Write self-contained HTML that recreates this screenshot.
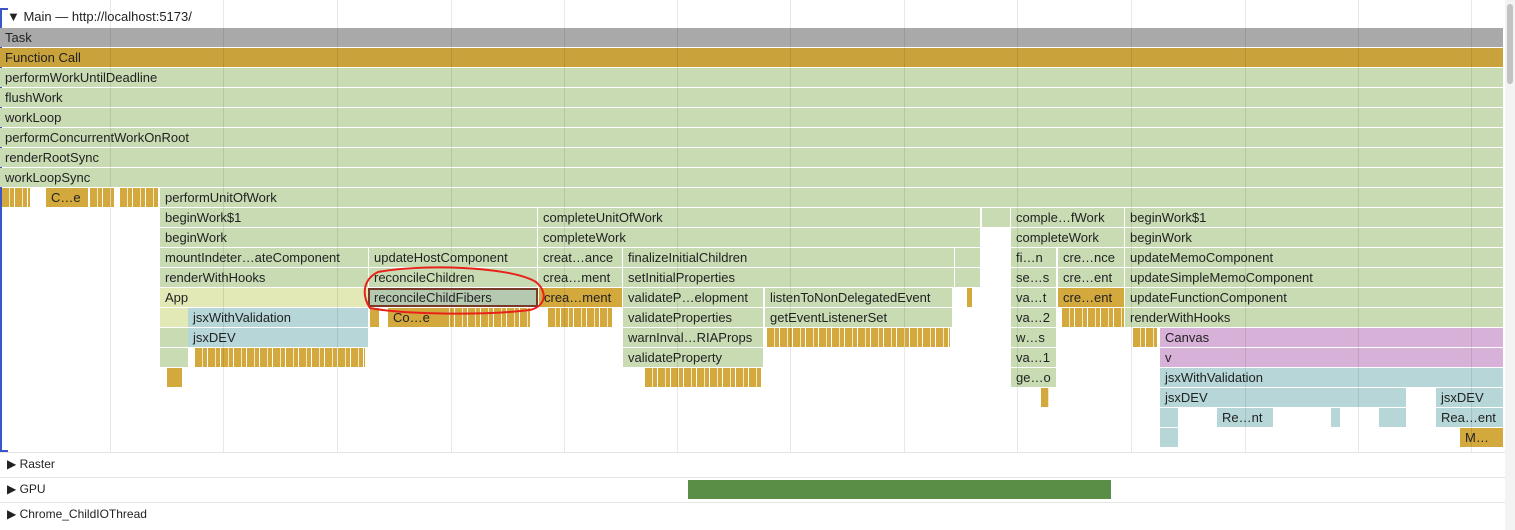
<!DOCTYPE html>
<html><head><meta charset="utf-8"><style>
*{margin:0;padding:0;box-sizing:border-box}
body{width:1515px;height:530px;overflow:hidden;background:#fff;position:relative;font-family:"Liberation Sans",sans-serif;font-size:13px;color:#222}
.b{position:absolute;height:19px;line-height:19px;padding-left:5px;overflow:hidden;white-space:nowrap;color:#222}
.g{background:#c8dbb3}.o{background:#d3a93d}.y{background:#e3e8b7}.u{background:#b6d6d8}.p{background:#d7b1d7}.k{background:#a9a9a9}
.s{background:repeating-linear-gradient(90deg,#d3a93d 0 7px,#f4e7c4 7px 8px,#d3a93d 8px 12px,#fff 12px 13px)}
.v{position:absolute;top:0;height:452px;width:1px;background:rgba(0,0,0,0.09)}
.t{position:absolute;left:7px;font-size:13px}
.l{position:absolute;left:0;width:1505px;height:1px;background:#e4e4e4}
</style></head><body>
<div style="position:absolute;left:0;top:8px;width:2px;height:444px;background:#3a56c8"></div>
<div style="position:absolute;left:0;top:8px;width:8px;height:2px;background:#3a56c8"></div>
<div style="position:absolute;left:0;top:450px;width:8px;height:2px;background:#3a56c8"></div>
<div class="t" style="top:9px">▼ Main — http://localhost:5173/</div>

<div class="b k" style="left:0;top:28px;width:1503px">Task</div>
<div class="b" style="left:0;top:48px;width:1503px;background:#c9a23b">Function Call</div>
<div class="b g" style="left:0;top:68px;width:1503px">performWorkUntilDeadline</div>
<div class="b g" style="left:0;top:88px;width:1503px">flushWork</div>
<div class="b g" style="left:0;top:108px;width:1503px">workLoop</div>
<div class="b g" style="left:0;top:128px;width:1503px">performConcurrentWorkOnRoot</div>
<div class="b g" style="left:0;top:148px;width:1503px">renderRootSync</div>
<div class="b g" style="left:0;top:168px;width:1503px">workLoopSync</div>

<div class="b s" style="left:2px;top:188px;width:28px"></div>
<div class="b o" style="left:46px;top:188px;width:42px">C…e</div>
<div class="b s" style="left:90px;top:188px;width:24px"></div>
<div class="b s" style="left:120px;top:188px;width:38px"></div>
<div class="b g" style="left:160px;top:188px;width:1343px">performUnitOfWork</div>

<div class="b g" style="left:160px;top:208px;width:377px">beginWork$1</div>
<div class="b g" style="left:538px;top:208px;width:442px">completeUnitOfWork</div>
<div class="b g" style="left:982px;top:208px;width:28px"></div>
<div class="b g" style="left:1011px;top:208px;width:113px">comple…fWork</div>
<div class="b g" style="left:1125px;top:208px;width:378px">beginWork$1</div>

<div class="b g" style="left:160px;top:228px;width:377px">beginWork</div>
<div class="b g" style="left:538px;top:228px;width:442px">completeWork</div>
<div class="b g" style="left:1011px;top:228px;width:113px">completeWork</div>
<div class="b g" style="left:1125px;top:228px;width:378px">beginWork</div>

<div class="b g" style="left:160px;top:248px;width:208px">mountIndeter…ateComponent</div>
<div class="b g" style="left:369px;top:248px;width:168px">updateHostComponent</div>
<div class="b g" style="left:538px;top:248px;width:84px">creat…ance</div>
<div class="b g" style="left:623px;top:248px;width:331px">finalizeInitialChildren</div>
<div class="b g" style="left:955px;top:248px;width:25px"></div>
<div class="b g" style="left:1011px;top:248px;width:45px">fi…n</div>
<div class="b g" style="left:1058px;top:248px;width:66px">cre…nce</div>
<div class="b g" style="left:1125px;top:248px;width:378px">updateMemoComponent</div>

<div class="b g" style="left:160px;top:268px;width:208px">renderWithHooks</div>
<div class="b g" style="left:369px;top:268px;width:168px">reconcileChildren</div>
<div class="b g" style="left:538px;top:268px;width:84px">crea…ment</div>
<div class="b g" style="left:623px;top:268px;width:331px">setInitialProperties</div>
<div class="b g" style="left:955px;top:268px;width:25px"></div>
<div class="b g" style="left:1011px;top:268px;width:45px">se…s</div>
<div class="b g" style="left:1058px;top:268px;width:66px">cre…ent</div>
<div class="b g" style="left:1125px;top:268px;width:378px">updateSimpleMemoComponent</div>

<div class="b y" style="left:160px;top:288px;width:208px">App</div>
<div class="b" style="left:368px;top:288px;width:170px;background:#b5c9b1;border:2px solid #7a3a2a;line-height:15px;padding-left:4px">reconcileChildFibers</div>
<div class="b o" style="left:539px;top:288px;width:83px">crea…ment</div>
<div class="b g" style="left:623px;top:288px;width:140px">validateP…elopment</div>
<div class="b g" style="left:765px;top:288px;width:187px">listenToNonDelegatedEvent</div>
<div class="b o" style="left:967px;top:288px;width:3px"></div>
<div class="b g" style="left:1011px;top:288px;width:45px">va…t</div>
<div class="b o" style="left:1058px;top:288px;width:66px">cre…ent</div>
<div class="b g" style="left:1125px;top:288px;width:378px">updateFunctionComponent</div>

<div class="b y" style="left:160px;top:308px;width:28px"></div>
<div class="b u" style="left:188px;top:308px;width:180px">jsxWithValidation</div>
<div class="b o" style="left:370px;top:308px;width:9px"></div>
<div class="b o" style="left:388px;top:308px;width:54px">Co…e</div>
<div class="b s" style="left:442px;top:308px;width:88px"></div>
<div class="b s" style="left:548px;top:308px;width:64px"></div>
<div class="b g" style="left:623px;top:308px;width:140px">validateProperties</div>
<div class="b g" style="left:765px;top:308px;width:187px">getEventListenerSet</div>
<div class="b g" style="left:1011px;top:308px;width:45px">va…2</div>
<div class="b s" style="left:1062px;top:308px;width:62px"></div>
<div class="b g" style="left:1125px;top:308px;width:378px">renderWithHooks</div>

<div class="b g" style="left:160px;top:328px;width:28px"></div>
<div class="b u" style="left:188px;top:328px;width:180px">jsxDEV</div>
<div class="b g" style="left:623px;top:328px;width:140px">warnInval…RIAProps</div>
<div class="b s" style="left:767px;top:328px;width:183px"></div>
<div class="b g" style="left:1011px;top:328px;width:45px">w…s</div>
<div class="b s" style="left:1133px;top:328px;width:24px"></div>
<div class="b p" style="left:1160px;top:328px;width:343px">Canvas</div>

<div class="b g" style="left:160px;top:348px;width:28px"></div>
<div class="b s" style="left:195px;top:348px;width:170px"></div>
<div class="b g" style="left:623px;top:348px;width:140px">validateProperty</div>
<div class="b g" style="left:1011px;top:348px;width:45px">va…1</div>
<div class="b p" style="left:1160px;top:348px;width:343px">v</div>

<div class="b o" style="left:167px;top:368px;width:15px"></div>
<div class="b s" style="left:645px;top:368px;width:117px"></div>
<div class="b g" style="left:1011px;top:368px;width:45px">ge…o</div>
<div class="b u" style="left:1160px;top:368px;width:343px">jsxWithValidation</div>

<div class="b s" style="left:1041px;top:388px;width:8px"></div>
<div class="b u" style="left:1160px;top:388px;width:246px">jsxDEV</div>
<div class="b u" style="left:1436px;top:388px;width:67px">jsxDEV</div>

<div class="b u" style="left:1160px;top:408px;width:18px"></div>
<div class="b u" style="left:1217px;top:408px;width:56px">Re…nt</div>
<div class="b u" style="left:1331px;top:408px;width:9px"></div>
<div class="b u" style="left:1379px;top:408px;width:27px"></div>
<div class="b u" style="left:1436px;top:408px;width:67px">Rea…ent</div>

<div class="b u" style="left:1160px;top:428px;width:18px"></div>
<div class="b o" style="left:1460px;top:428px;width:43px">M…</div>

<div class="v" style="left:110px"></div><div class="v" style="left:223px"></div><div class="v" style="left:337px"></div><div class="v" style="left:451px"></div><div class="v" style="left:564px"></div><div class="v" style="left:677px"></div><div class="v" style="left:790px"></div><div class="v" style="left:904px"></div><div class="v" style="left:1017px"></div><div class="v" style="left:1131px"></div><div class="v" style="left:1245px"></div><div class="v" style="left:1358px"></div><div class="v" style="left:1471px"></div>

<svg style="position:absolute;left:0;top:0" width="1515" height="530"><path d="M378 272 C420 264 510 266 536 282 C548 292 546 306 530 310 C480 316 400 314 370 308 C362 296 362 280 378 272 Z" fill="none" stroke="#e8211b" stroke-width="2"/></svg>

<div class="l" style="top:452px"></div>
<div class="t" style="top:457px;font-size:12px">▶ Raster</div>
<div class="l" style="top:477px"></div>
<div class="t" style="top:482px;font-size:12px">▶ GPU</div>
<div style="position:absolute;left:688px;top:480px;width:423px;height:19px;background:#5a8d45"></div>
<div class="l" style="top:502px"></div>
<div class="t" style="top:507px;font-size:12px">▶ Chrome_ChildIOThread</div>
<div style="position:absolute;left:1505px;top:0;width:10px;height:530px;background:#f3f3f3"></div>
<div style="position:absolute;left:1507px;top:4px;width:6px;height:80px;border-radius:3px;background:#c2c2c2"></div>
</body></html>
